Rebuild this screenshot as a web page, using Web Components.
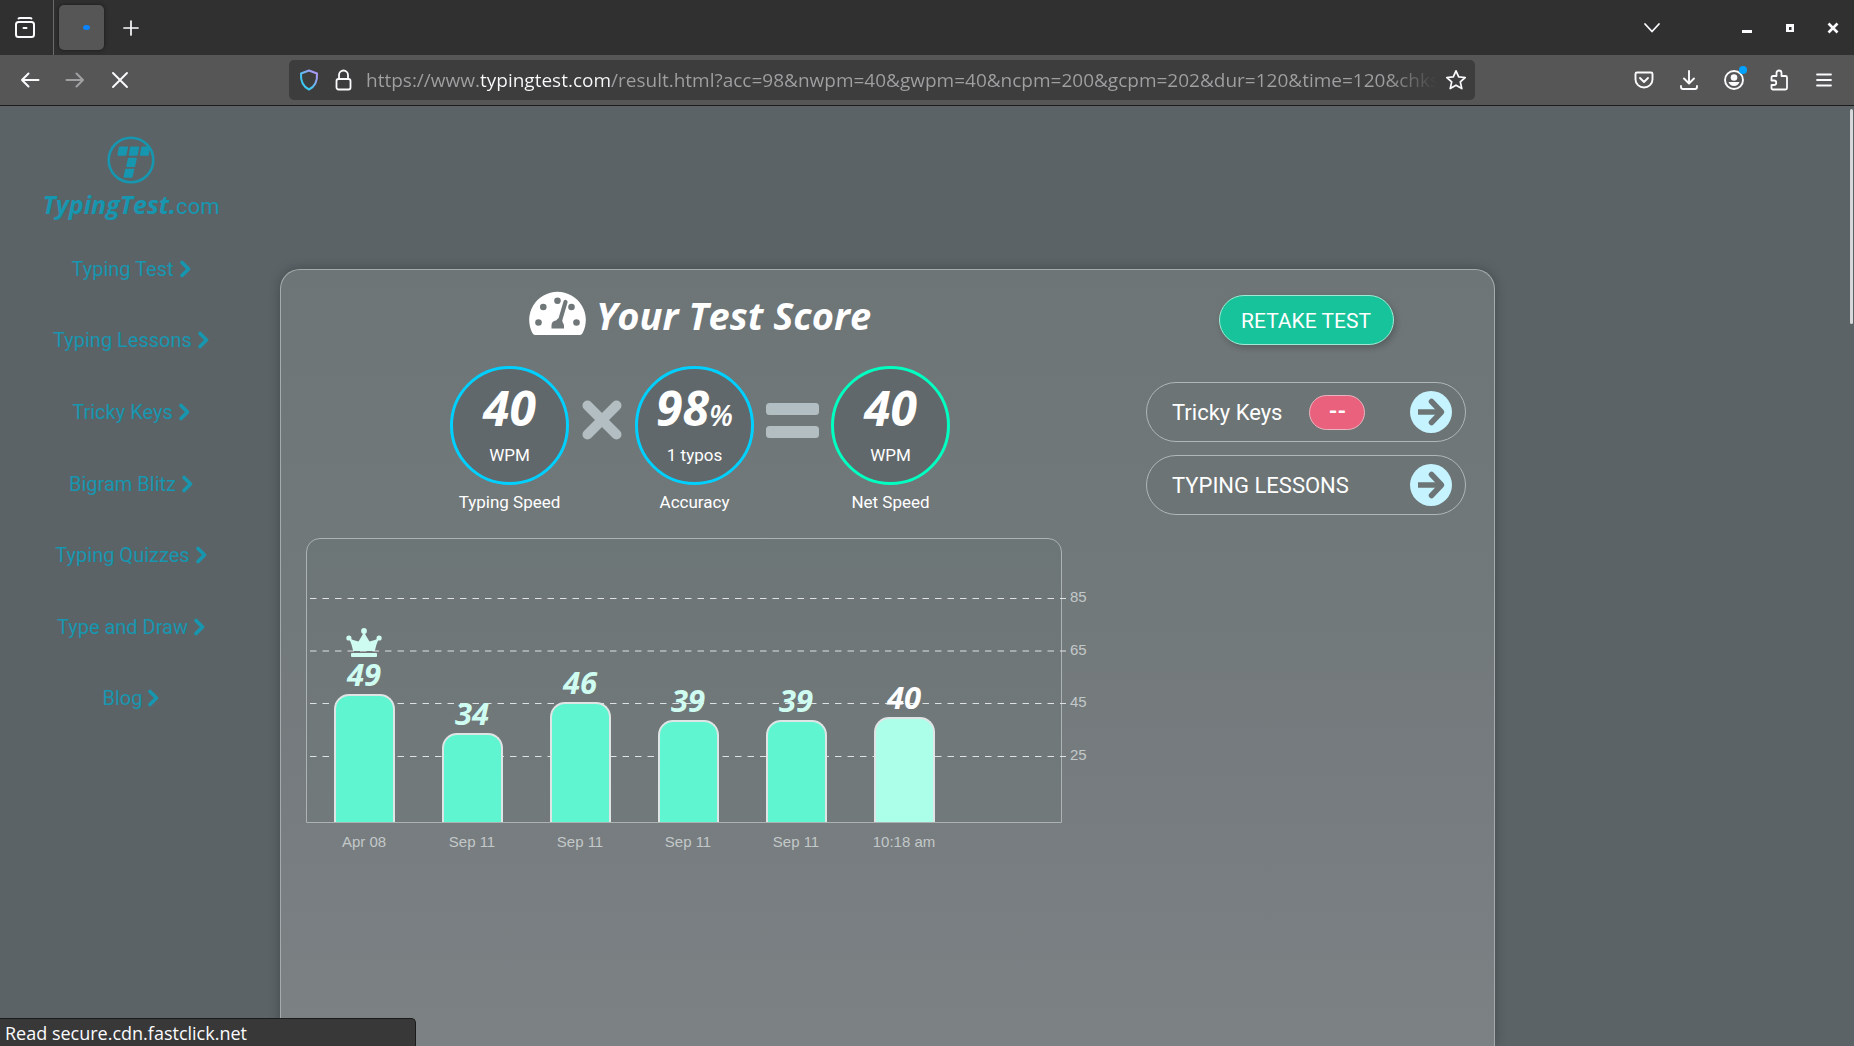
<!DOCTYPE html>
<html lang="en">
<head>
<meta charset="utf-8">
<title>Typing Test Result</title>
<style>
  html, body { margin: 0; height: 100%; }
  body { background: #5b6366; font-family: Roboto, "Liberation Sans", sans-serif; overflow: hidden; }
</style>
</head>
<body>
<result-app></result-app>

<script>
const BASE = `
  *, *::before, *::after { box-sizing: border-box; }
  svg { display: block; flex: none; }
  button { appearance: none; background: none; border: 0; padding: 0; margin: 0; font: inherit; color: inherit; cursor: pointer; }
  a { color: inherit; text-decoration: none; }
`;

function define(name, css, html, ready) {
  customElements.define(name, class extends HTMLElement {
    constructor() {
      super();
      this.attachShadow({ mode: 'open' }).innerHTML =
        `<style>${BASE}${css}</style>${typeof html === 'function' ? html(this) : html}`;
    }
    connectedCallback() { if (ready) ready(this.shadowRoot); }
  });
}

/* ---------- browser chrome ---------- */

define('tab-strip', `
  :host { display: flex; align-items: center; height: 55px; background: #303030; color: #fbfbfe; }
  button { display: grid; place-items: center; height: 100%; }
  .view { width: 54px; padding-right: 4px; border-right: 1px solid #6a6a6a; }
  .tab { width: 45px; height: 45px; margin: 0 5px; border-radius: 5px; background: #565656; box-shadow: 0 0 4px rgba(0,0,0,.5); padding-left: 10px; }
  .tab i { width: 7px; height: 5px; border-radius: 50%; background: #0a84ff; }
  .new { width: 44px; }
  .list { width: 40px; margin-left: auto; }
  .win { display: flex; height: 100%; margin-left: 53px; }
  .win button { width: 43px; }
`, `
  <button class="view" aria-label="View recent browsing">
    <svg width="22" height="22" viewBox="0 0 22 22" fill="none" stroke="currentColor" stroke-width="2" stroke-linecap="round" stroke-linejoin="round"><path d="M4.500 1.500 Q5 1 6 1 H16 Q17 1 17.500 1.500" stroke-width="1.800"/><rect x="2" y="5" width="18" height="15" rx="2.500"/><path d="M9.500 11 H12.500"/></svg>
  </button>
  <button class="tab" aria-label="Loading tab"><i></i></button>
  <button class="new" aria-label="New tab">
    <svg width="16" height="16" viewBox="0 0 16 16" stroke="currentColor" stroke-width="1.700" stroke-linecap="round"><path d="M8 1V15M1 8H15"/></svg>
  </button>
  <button class="list" aria-label="List all tabs">
    <svg width="18" height="12" viewBox="0 0 18 12" fill="none" stroke="currentColor" stroke-width="1.800" stroke-linecap="round" stroke-linejoin="round"><path d="M2 2 L9 9.500 L16 2"/></svg>
  </button>
  <div class="win">
    <button aria-label="Minimize"><svg width="12" height="12" viewBox="0 0 12 12"><path fill="currentColor" d="M1 8H11V11H1Z"/></svg></button>
    <button aria-label="Restore"><svg width="10" height="10" viewBox="0 0 10 10"><path fill="currentColor" fill-rule="evenodd" d="M1 1H9V9H1ZM4 4V7H6.500V4Z"/></svg></button>
    <button aria-label="Close"><svg width="12" height="12" viewBox="0 0 12 12" stroke="currentColor" stroke-width="2.600"><path d="M1.500 1.500 10.500 10.500M10.500 1.500 1.500 10.500"/></svg></button>
  </div>
`);

define('nav-bar', `
  :host { display: flex; align-items: center; height: 51px; padding: 0 8px 0 7px; background: #565656; border-bottom: 1px solid #1c1c1c; color: #fbfbfe; }
  button { display: grid; place-items: center; width: 45px; height: 40px; flex: none; position: relative; }
  .nav { display: flex; width: 282px; flex: none; }
  .nav [disabled] { opacity: .45; }
  .url { display: flex; align-items: center; flex: 1; min-width: 0; height: 40px; margin-right: 146px; padding-left: 10px; border-radius: 5px; background: #3d3d3d; }
  .url svg + svg { margin: 0 14px 0 16px; }
  input {
    flex: 1; min-width: 0; height: 36px; padding: 0; border: 0; outline: 0;
    font: 19px/36px "Open Sans", "Noto Sans", sans-serif; color: transparent;
    background: linear-gradient(90deg, #a0a0a2 0 var(--host-start, 114px), #fbfbfe var(--host-start, 114px) var(--host-end, 246px), #a0a0a2 var(--host-end, 246px));
    -webkit-background-clip: text; background-clip: text;
    -webkit-mask-image: linear-gradient(90deg, #000 calc(100% - 50px), transparent);
    mask-image: linear-gradient(90deg, #000 calc(100% - 50px), transparent);
  }
  .star { width: 38px; }
  .dot { position: absolute; left: 28px; top: 6px; width: 8px; height: 8px; border-radius: 50%; background: #00a2ff; }
`, `
  <div class="nav">
    <button aria-label="Back"><svg width="20" height="18" viewBox="0 0 20 18" fill="none" stroke="currentColor" stroke-width="2" stroke-linecap="round" stroke-linejoin="round"><path d="M18.500 9H2M8.500 2.500 2 9 8.500 15.500"/></svg></button>
    <button aria-label="Forward" disabled><svg width="20" height="18" viewBox="0 0 20 18" fill="none" stroke="currentColor" stroke-width="2" stroke-linecap="round" stroke-linejoin="round"><path d="M1.500 9H18M11.500 2.500 18 9 11.500 15.500"/></svg></button>
    <button aria-label="Stop"><svg width="18" height="18" viewBox="0 0 18 18" stroke="currentColor" stroke-width="1.900" stroke-linecap="round"><path d="M2 2 16 16M16 2 2 16"/></svg></button>
  </div>
  <div class="url">
    <svg width="20" height="22" viewBox="0 0 20 22" fill="none"><defs><linearGradient id="g" x1="1" y1="0" x2="0" y2="1"><stop offset=".15" stop-color="#a99bf5"/><stop offset=".7" stop-color="#3cc8f0"/></linearGradient></defs><path stroke="url(#g)" stroke-width="2" stroke-linejoin="round" d="M10 1.500 18 4.500 C18.500 12 16 17.500 10 20.500 C4 17.500 1.500 12 2 4.500Z"/></svg>
    <svg width="17" height="22" viewBox="0 0 17 22" fill="none" stroke="#fbfbfe" stroke-width="1.800"><rect x="1.500" y="10" width="14" height="10.500" rx="2"/><path d="M4 10V6a4.500 4.500 0 0 1 9 0V10"/></svg>
    <input type="text" aria-label="Address" value="https://www.typingtest.com/result.html?acc=98&amp;nwpm=40&amp;gwpm=40&amp;ncpm=200&amp;gcpm=202&amp;dur=120&amp;time=120&amp;chksum">
    <button class="star" aria-label="Bookmark"><svg width="22" height="22" viewBox="0 0 22 22" fill="none" stroke="currentColor" stroke-width="1.700" stroke-linejoin="round"><path d="M11 1.800 13.700 7.900 20.200 8.500 15.300 12.900 16.800 19.600 11 16.200 5.200 19.600 6.700 12.900 1.800 8.500 8.300 7.900Z"/></svg></button>
  </div>
  <button aria-label="Pocket"><svg width="20" height="20" viewBox="0 0 20 20" fill="none" stroke="currentColor" stroke-width="1.900" stroke-linecap="round" stroke-linejoin="round"><path d="M3 2.500H17Q18.500 2.500 18.500 4V9.500A8.500 8 0 0 1 1.500 9.500V4Q1.500 2.500 3 2.500ZM6 8 10 12 14 8"/></svg></button>
  <button aria-label="Downloads"><svg width="20" height="22" viewBox="0 0 20 22" fill="none" stroke="currentColor" stroke-width="1.900" stroke-linecap="round" stroke-linejoin="round"><path d="M10 2V14M5 9.500 10 14.500 15 9.500M2 17V18Q2 20 4 20H16Q18 20 18 18V17"/></svg></button>
  <button aria-label="Account"><svg width="22" height="22" viewBox="0 0 22 22" fill="none" stroke="currentColor" stroke-width="1.900"><circle cx="11" cy="11" r="9"/><circle cx="11" cy="8.500" r="3.300" fill="currentColor" stroke="none"/><path fill="currentColor" stroke="none" d="M5.500 13H16.500Q15 17 11 17T5.500 13Z"/></svg><span class="dot"></span></button>
  <button aria-label="Extensions"><svg width="20" height="22" viewBox="0 0 20 22" fill="none" stroke="currentColor" stroke-width="1.800" stroke-linejoin="round"><path d="M7.500 7V4A2.500 2.500 0 0 1 12.500 4V7H16.500Q18 7 18 8.500V19Q18 20.500 16.500 20.500H4Q2.500 20.500 2.500 19V16H5A2.200 2.200 0 0 0 5 11.500H2.500V8.500Q2.500 7 4 7Z"/></svg></button>
  <button aria-label="Menu"><svg width="18" height="16" viewBox="0 0 18 16" stroke="currentColor" stroke-width="1.800" stroke-linecap="round"><path d="M2 2.500H16M2 8H16M2 13.500H16"/></svg></button>
`, root => {
  /* The domain is lighter than the rest of the address: find where it starts and ends. */
  const input = root.querySelector('input');
  const ctx = document.createElement('canvas').getContext('2d');
  ctx.font = '19px "Open Sans", "Noto Sans", sans-serif';
  const width = end => ctx.measureText(input.value.slice(0, end)).width + 'px';
  input.style.setProperty('--host-start', width(input.value.indexOf('typingtest')));
  input.style.setProperty('--host-end', width(input.value.indexOf('/result')));
});

define('status-bubble', `
  :host { position: absolute; left: 0; bottom: 0; width: 416px; height: 28px; padding-left: 5px; background: #383838; border: 1px solid #1b1b1b; border-width: 1px 1px 0 0; border-top-right-radius: 5px; color: #fbfbfe; font: 18px/28px "Open Sans", "Noto Sans", sans-serif; white-space: nowrap; box-sizing: border-box; }
`, `<slot></slot>`);

/* ---------- site sidebar ---------- */

define('site-logo', `
  :host { display: block; color: #1796b0; text-align: center; }
  a { display: flex; flex-direction: column; align-items: center; gap: 4px; }
  .name { font: 22px/32px Roboto, sans-serif; white-space: nowrap; }
  b { font: italic 700 25px/32px "Open Sans", "Noto Sans", sans-serif; }
`, `
  <a href="#home">
    <svg width="48" height="48" viewBox="0 0 48 48" fill="currentColor"><circle cx="24" cy="24" r="22.300" fill="none" stroke="currentColor" stroke-width="2.600"/>
      <g stroke="currentColor" stroke-width="1.600" stroke-linejoin="round"><path d="M12.700 11.200H20.300L18.500 19H11.200ZM24 11.200H31.500L29.800 19H22.500ZM35.200 11.200H42.300L40.800 19H33.700ZM21.800 22.500H29L27.300 30.300H20ZM19 33.500H26.500L24.700 41H17.300Z"/></g>
    </svg>
    <span class="name"><b>TypingTest.</b>com</span>
  </a>
`);

define('side-link', `
  :host { display: flex; flex: 1; align-items: center; justify-content: center; }
  a { display: flex; align-items: center; gap: 6px; font-size: 20px; line-height: 24px; white-space: nowrap; color: #1796b0; }
`, `
  <a href="#"><slot></slot><svg width="11" height="18" viewBox="0 0 11 18" fill="none" stroke="currentColor" stroke-width="3.600" stroke-linecap="round" stroke-linejoin="round"><path d="M2 2.500 8.500 9 2 15.500"/></svg></a>
`);

define('side-bar', `
  :host { display: block; padding-top: 30px; }
  nav { display: flex; flex-direction: column; height: 501px; margin-top: 10px; }
`, `
  <site-logo></site-logo>
  <nav>
    <side-link>Typing Test</side-link>
    <side-link>Typing Lessons</side-link>
    <side-link>Tricky Keys</side-link>
    <side-link>Bigram Blitz</side-link>
    <side-link>Typing Quizzes</side-link>
    <side-link>Type and Draw</side-link>
    <side-link>Blog</side-link>
  </nav>
`);

/* ---------- score ---------- */

define('score-title', `
  :host { display: flex; align-items: center; justify-content: center; gap: 10px; height: 48px; color: #fff; }
  svg { margin-bottom: 4px; }
  h1 { margin: 0; font: italic 700 38px/48px "Open Sans", "Noto Sans", sans-serif; white-space: nowrap; }
`, `
  <svg width="57" height="44" viewBox="0 0 57 44"><path fill="#fff" d="M6 44Q4.500 44 3.500 42.300A28.300 28.300 0 1 1 53.500 42.300Q52.500 44 51 44Z"/>
    <g fill="#6f7779"><circle cx="9.500" cy="31.500" r="3.300"/><circle cx="14.300" cy="16" r="3.300"/><circle cx="28.500" cy="9.700" r="3.300"/><circle cx="42.500" cy="16" r="3.300"/><circle cx="47.500" cy="31.500" r="3.300"/></g>
    <path stroke="#fff" stroke-width="8" stroke-linecap="round" d="M36 11 30.500 29"/><path stroke="#6f7779" stroke-width="4.200" stroke-linecap="round" d="M36.500 11 31.500 28"/>
    <path fill="#6f7779" d="M22.500 37.500V34.500Q22.500 30 27 29.500L29 27.500H33L33.500 31Q35 33 35 35V37.500Z"/></svg>
  <h1><slot></slot></h1>
`);

define('score-ring', `
  :host { display: flex; flex-direction: column; align-items: center; width: 119px; gap: 5px; color: #fff; font-size: 17px; line-height: 24px; }
  .ring { display: flex; flex-direction: column; align-items: center; gap: 11px; width: 119px; height: 119px; padding-top: 15px; border: 3px solid #00d0ff; border-radius: 50%; background: #61686b; }
  :host([net]) .ring { border-color: #00ffc0; }
  .num { height: 48px; font: italic 700 48px/48px "Open Sans", "Noto Sans", sans-serif; white-space: nowrap; }
  ::slotted(small) { font-size: 29px; font-weight: 600; line-height: 0; }
  .name { white-space: nowrap; }
`, `
  <div class="ring"><span class="num"><slot></slot></span><slot name="unit"></slot></div>
  <span class="name"><slot name="label"></slot></span>
`);

define('score-equation', `
  :host { display: flex; justify-content: center; }
  .times { margin: 33px 12px 0; }
  .equals { margin: 37px 12px 0; }
`, `
  <score-ring>40<span slot="unit">WPM</span><span slot="label">Typing Speed</span></score-ring>
  <svg class="times" width="42" height="42" viewBox="0 0 42 42" stroke="#b2bec2" stroke-width="10" stroke-linecap="round"><path d="M6.500 6.500 35.500 35.500M35.500 6.500 6.500 35.500"/></svg>
  <score-ring>98<small>%</small><span slot="unit">1 typos</span><span slot="label">Accuracy</span></score-ring>
  <svg class="equals" width="53" height="35" viewBox="0 0 53 35" fill="#b2bec2"><rect width="53" height="12" rx="3.500"/><rect y="23" width="53" height="12" rx="3.500"/></svg>
  <score-ring net>40<span slot="unit">WPM</span><span slot="label">Net Speed</span></score-ring>
`);

define('chart-bar', `
  :host { display: flex; flex-direction: column; align-items: center; justify-content: flex-end; }
  .value { font: italic 700 31px/30px "Open Sans", "Noto Sans", sans-serif; color: #cffcf1; margin-bottom: 5px; }
  .bar { width: 61px; border: 2px solid #dfe5e4; border-bottom: 0; border-radius: 15px 15px 0 0; background: #60f5d1; }
  :host([current]) .bar { background: #acffe8; }
  :host([current]) .value { color: #fff; }
  svg { display: none; margin-bottom: 2px; }
  :host([best]) svg { display: block; }
`, el => `
  <svg width="36" height="29" viewBox="0 0 36 29" fill="#cffcf1"><circle cx="18" cy="3" r="2.900"/><circle cx="2.900" cy="10" r="2.600"/><circle cx="33.100" cy="10" r="2.600"/><path d="M18 4Q20 8 23.500 13.500 28 13 33 10 30 17 28.800 23H7.200Q6 17 3 10 8 13 12.500 13.500 16 8 18 4Z"/><rect x="5" y="25" width="26" height="4" rx="1"/></svg>
  <span class="value"><slot></slot></span>
  <div class="bar" style="height:${Math.floor(el.textContent * 2.63)}px"></div>
`);

define('score-chart', `
  :host { display: grid; grid-template-columns: minmax(0, 1fr) 32px; color: #c3c8c9; font: 15px/20px "Liberation Sans", sans-serif; }
  .plot { position: relative; height: 285px; border: 1px solid #adb2b3; border-radius: 14px 14px 0 0; background: rgba(100,110,110,.25); }
  .plot > svg { position: absolute; left: 3px; top: 0; width: calc(100% + 2px); height: 283px; }
  .bars, .dates { display: grid; grid-template-columns: repeat(7, 1fr); margin: 0 -5px 0 3px; }
  .bars { position: relative; height: 100%; }
  .dates { text-align: center; padding-top: 9px; margin: 0 -4px 0 4px; }
  .axis { display: flex; flex-direction: column; justify-content: space-between; height: 178px; margin-top: 49px; padding-left: 8px; }
`, `
  <div class="plot">
    <svg aria-hidden="true" stroke="#dfe2e3" stroke-width="1" stroke-dasharray="6.500 6"><line x1="0" x2="100%" y1="59.500" y2="59.500"/><line x1="0" x2="100%" y1="112" y2="112"/><line x1="0" x2="100%" y1="164.500" y2="164.500"/><line x1="0" x2="100%" y1="217.500" y2="217.500"/></svg>
    <div class="bars">
      <slot></slot>
    </div>
  </div>
  <div class="axis"><span>85</span><span>65</span><span>45</span><span>25</span></div>
  <div class="dates"><span>Apr 08</span><span>Sep 11</span><span>Sep 11</span><span>Sep 11</span><span>Sep 11</span><span>10:18 am</span></div>
`);

/* ---------- actions ---------- */

define('retake-button', `
  :host { display: block; }
  button { width: 175px; height: 50px; padding-top: 2px; border: 1px solid #9fead2; border-radius: 25px; background: #17c39b; color: #fff; font-size: 21px; line-height: 26px; box-shadow: 2px 3px 6px rgba(0,0,0,.2); }
`, `<button><slot></slot></button>`);

define('action-link', `
  :host { display: block; width: 100%; }
  a { display: flex; align-items: center; height: 60px; padding: 0 13px 0 25px; border: 1px solid #b1b6b7; border-radius: 30px; background: #6c7475; color: #fff; font-size: 22px; line-height: 28px; white-space: nowrap; }
  .text { padding-top: 2px; }
  svg { margin-left: auto; }
  ::slotted([slot=badge]) { width: 56px; height: 35px; margin-left: 27px; border: 1px solid #e8b4c0; border-radius: 18px; background: #e9617d; font-weight: 700; line-height: 32px; text-align: center; box-sizing: border-box; }
`, `
  <a href="#"><span class="text"><slot></slot></span><slot name="badge"></slot>
    <svg width="42" height="42" viewBox="0 0 42 42"><circle cx="21" cy="21" r="21" fill="#c5f3ff"/><path fill="none" stroke="#6c7475" stroke-width="5.500" stroke-linecap="round" stroke-linejoin="round" d="M21.500 10.500 31.500 21 21.500 31.500"/><path stroke="#6c7475" stroke-width="5.500" d="M8 21H30"/></svg>
  </a>
`);

define('score-card', `
  :host { display: grid; grid-template-columns: minmax(0, 1fr) 320px; gap: 52px; align-items: start; margin-top: 163px; padding: 0 28px 0 25px; border: 1px solid #a5abac; border-bottom: 0; border-radius: 20px 20px 0 0; background: linear-gradient(#6d7577, #72797b 45%, #7c8184); box-shadow: 0 0 12px rgba(0,0,0,.25); }
  .score { display: flex; flex-direction: column; padding-top: 21px; }
  score-equation { margin-top: 27px; }
  score-chart { margin-top: 24px; }
  .side { display: flex; flex-direction: column; align-items: center; gap: 13px; padding-top: 25px; }
  retake-button { margin-bottom: 24px; }
`, `
  <section class="score">
    <score-title>Your Test Score</score-title>
    <score-equation></score-equation>
    <score-chart>
      <chart-bar best>49</chart-bar><chart-bar>34</chart-bar><chart-bar>46</chart-bar><chart-bar>39</chart-bar><chart-bar>39</chart-bar><chart-bar current>40</chart-bar>
    </score-chart>
  </section>
  <section class="side">
    <retake-button>RETAKE TEST</retake-button>
    <action-link>Tricky Keys<span slot="badge">--</span></action-link>
    <action-link>TYPING LESSONS</action-link>
  </section>
`);

define('result-app', `
  :host { display: flex; flex-direction: column; height: 100vh; position: relative; overflow: hidden; }
  main { flex: 1; min-height: 0; display: grid; grid-template-columns: 262px minmax(0, 1fr) 359px; column-gap: 0; }
  score-card { margin-left: 18px; }
  .thumb { position: absolute; right: 1px; top: 109px; width: 3px; height: 215px; border-radius: 2px; background: #d5d7d8; }
`, `
  <tab-strip></tab-strip>
  <nav-bar></nav-bar>
  <main>
    <side-bar></side-bar>
    <score-card></score-card>
  </main>
  <div class="thumb"></div>
  <status-bubble>Read secure.cdn.fastclick.net</status-bubble>
`);
</script>
</body>
</html>
